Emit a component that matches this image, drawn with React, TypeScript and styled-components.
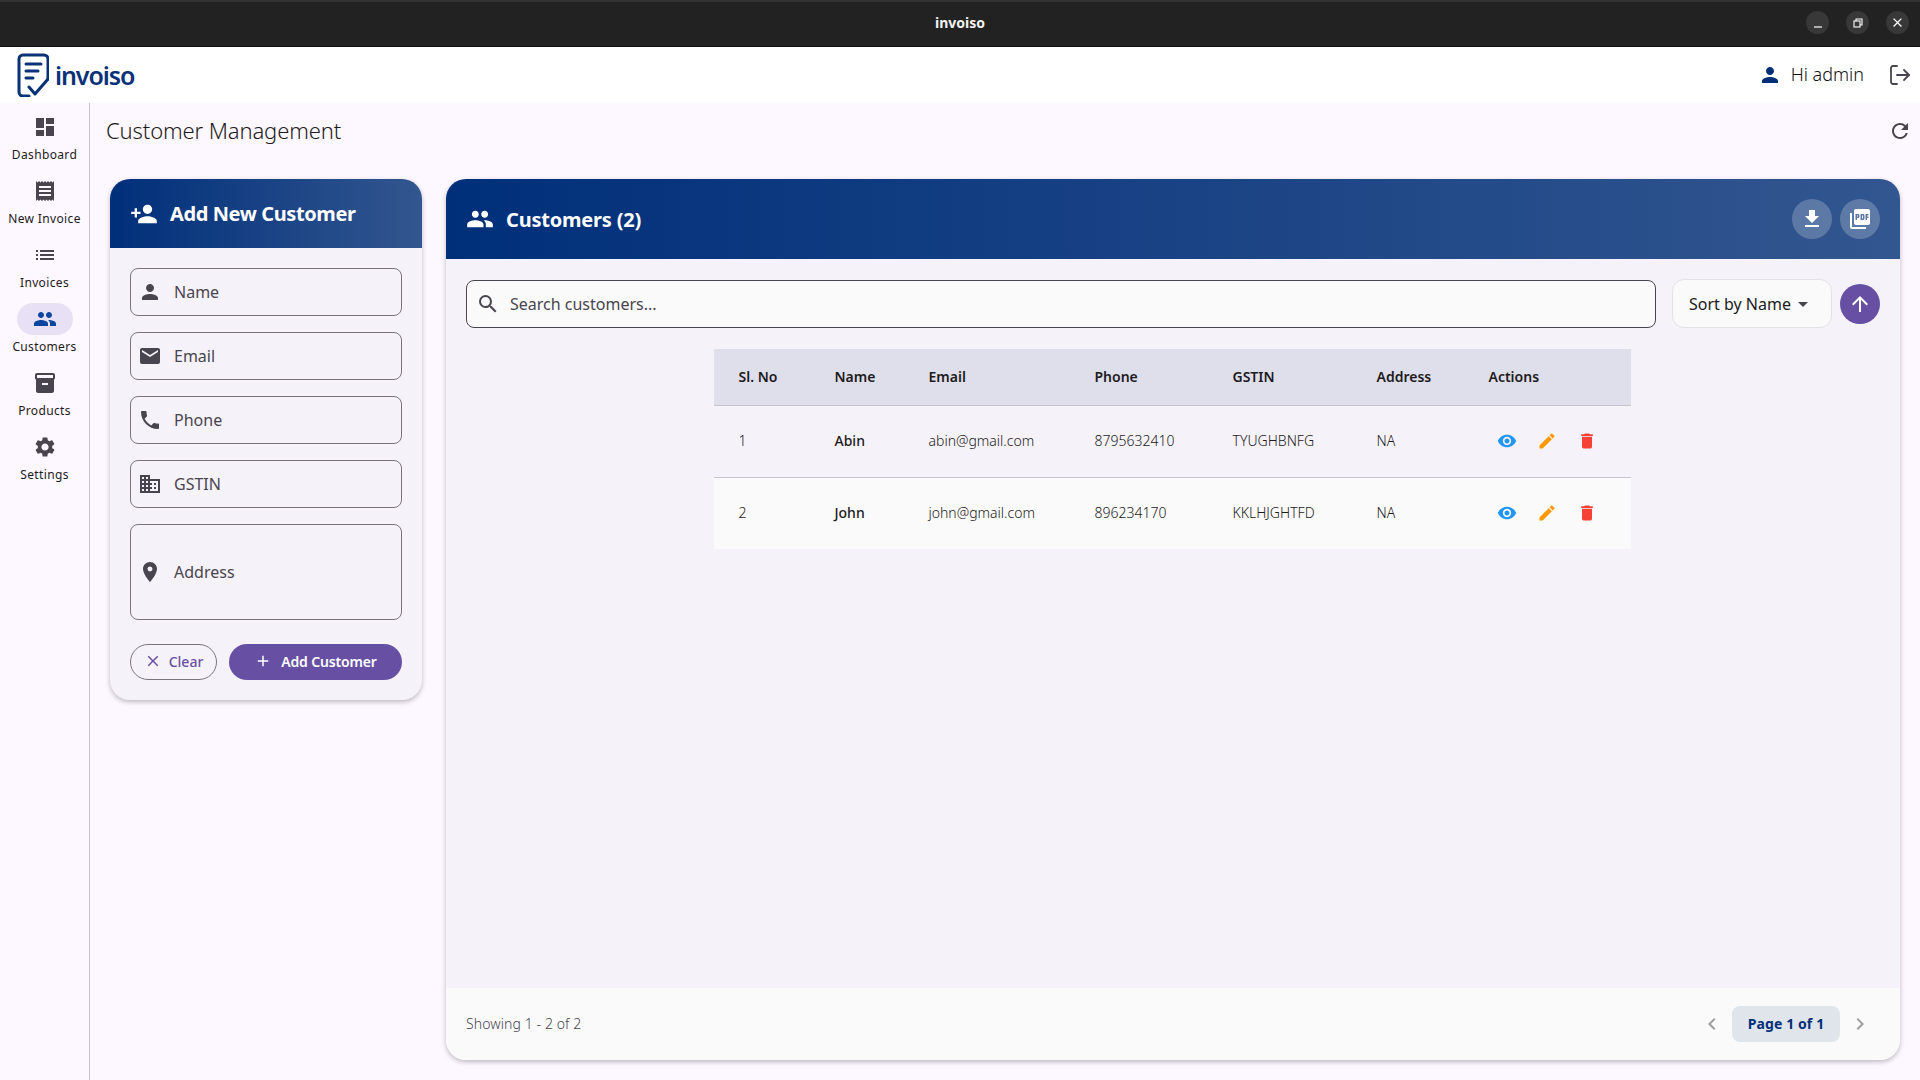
import React from 'react';
import styled, { createGlobalStyle } from 'styled-components';
import {
  MdDashboard, MdReceipt, MdList, MdPeople, MdInventory2, MdSettings, MdPerson, MdEmail, MdPhone,
  MdDomain, MdLocationOn, MdClose, MdAdd, MdPersonAdd, MdFileDownload, MdPictureAsPdf, MdArrowUpward,
  MdSearch, MdRefresh, MdVisibility, MdEdit, MdDelete, MdChevronLeft, MdChevronRight, MdArrowDropDown,
} from 'react-icons/md';
import { LogOut } from 'lucide-react';

const FONT = '"Noto Sans", "Open Sans", sans-serif';

const GlobalStyle = createGlobalStyle`
  html, body { margin: 0; padding: 0; background: #fdf7ff; }
  body { font-family: ${FONT}; color: #1d1b20; }
  * { box-sizing: border-box; }
`;

const Window = styled.div`
  width: 1920px;
  height: 1080px;
  overflow: hidden;
  display: flex;
  flex-direction: column;
  background: #fdf7ff;
`;

const TitleBar = styled.div`
  height: 47px;
  background: #222222;
  border-top: 2px solid #333333;
  border-bottom: 1px solid #111111;
  padding-bottom: 3px;
  display: flex;
  align-items: center;
  justify-content: center;
  position: relative;
  color: #f2f2f2;
  font-size: 14px;
  font-weight: 700;
`;

const WindowButtons = styled.div`
  position: absolute;
  right: 11px;
  top: 9px;
  display: flex;
  gap: 17px;
`;

const WindowButton = styled.div`
  width: 23px;
  height: 23px;
  border-radius: 50%;
  background: #383838;
  display: flex;
  align-items: center;
  justify-content: center;
  color: #ffffff;
`;

const AppHeader = styled.header`
  height: 56px;
  background: #ffffff;
  display: flex;
  align-items: center;
  justify-content: space-between;
  padding: 0 8px 0 17px;
`;

const Brand = styled.div`
  display: flex;
  align-items: flex-end;
  gap: 6px;
`;

const BrandName = styled.span`
  font-family: "Noto Sans", sans-serif;
  font-size: 25px;
  font-weight: 600;
  line-height: 32px;
  letter-spacing: -1.1px;
  color: #0b3278;
  margin-bottom: 6px;
`;

const UserArea = styled.div`
  display: flex;
  align-items: center;
  color: #111111;
  font-size: 18px;
  font-weight: 300;
`;

const UserName = styled.span`
  margin: 0 24px 2px 9px;
`;

const Body = styled.div`
  flex: 1;
  display: flex;
  min-height: 0;
`;

const Rail = styled.nav`
  width: 90px;
  border-right: 1px solid #cac4d0;
  padding-top: 8px;
  display: flex;
  flex-direction: column;
  align-items: center;
`;

const RailItem = styled.div`
  height: 64px;
  width: 100%;
  display: flex;
  flex-direction: column;
  align-items: center;
`;

const RailPill = styled.div<{ $active?: boolean }>`
  width: 56px;
  height: 32px;
  border-radius: 16px;
  display: flex;
  align-items: center;
  justify-content: center;
  background: ${(p) => (p.$active ? '#e8e0f5' : 'transparent')};
  color: ${(p) => (p.$active ? '#0b46a0' : '#49454f')};
`;

const RailLabel = styled.span`
  margin-top: 2px;
  font-size: 12px;
  line-height: 20px;
  letter-spacing: 0.35px;
  color: #1d1b20;
`;

const Main = styled.main`
  flex: 1;
  display: flex;
  flex-direction: column;
  min-width: 0;
`;

const PageHead = styled.div`
  height: 56px;
  flex: none;
  display: flex;
  align-items: center;
  justify-content: space-between;
  padding: 0 8px 0 16px;
  color: #49454f;
`;

const PageTitle = styled.h1`
  margin: 0 0 2px;
  font-size: 22px;
  font-weight: 300;
  line-height: 28px;
  letter-spacing: -0.12px;
  color: #1d1b20;
`;

const Content = styled.div`
  flex: 1;
  display: flex;
  gap: 24px;
  padding: 20px 20px 20px 20px;
  min-height: 0;
`;

const Card = styled.section`
  background: #f6f2fa;
  border-radius: 20px;
  box-shadow: 0 2px 5px rgba(0, 0, 0, 0.25);
  overflow: hidden;
  display: flex;
  flex-direction: column;
`;

const FormCard = styled(Card)`
  width: 312px;
  flex: none;
  align-self: flex-start;
`;

const ListCard = styled(Card)`
  flex: 1;
  min-width: 0;
`;

const CardHeader = styled.div<{ $tall?: boolean }>`
  height: ${(p) => (p.$tall ? 80 : 69)}px;
  flex: none;
  background: linear-gradient(90deg, #002f7a, #32568f);
  color: #ffffff;
  display: flex;
  align-items: center;
  gap: 12px;
  padding: 0 20px;
`;

const CardTitle = styled.h2`
  margin: 0;
  font-size: 20px;
  font-weight: 700;
  line-height: 28px;
  letter-spacing: -0.4px;
`;

const ListTitle = styled(CardTitle)`
  margin-top: 2px;
  letter-spacing: -0.2px;
`;

const HeaderActions = styled.div`
  margin-left: auto;
  display: flex;
  gap: 8px;
`;

const RoundButton = styled.button<{ $solid?: boolean }>`
  width: 40px;
  height: 40px;
  border: 0;
  padding: 0;
  border-radius: 50%;
  display: flex;
  align-items: center;
  justify-content: center;
  color: #ffffff;
  background: ${(p) => (p.$solid ? '#6750a4' : 'rgba(255, 255, 255, 0.22)')};
`;

const Form = styled.div`
  padding: 20px;
  display: flex;
  flex-direction: column;
  gap: 16px;
`;

const Field = styled.div<{ $tall?: boolean }>`
  height: ${(p) => (p.$tall ? 96 : 48)}px;
  border: 1px solid #79747e;
  border-radius: 8px;
  display: flex;
  align-items: center;
  gap: 12px;
  padding-left: 7px;
  font-size: 16px;
  color: #49454f;
`;

const FormButtons = styled.div`
  display: flex;
  gap: 12px;
  margin-top: 8px;
`;

const ClearButton = styled.button`
  width: 87px;
  height: 36px;
  border: 1px solid #79747e;
  border-radius: 18px;
  background: transparent;
  color: #6750a4;
  font-family: ${FONT};
  font-size: 14px;
  font-weight: 500;
  display: flex;
  align-items: center;
  justify-content: center;
  gap: 7px;
  padding: 0 0 2px;
`;

const AddButton = styled.button`
  flex: 1;
  height: 36px;
  border: 0;
  border-radius: 18px;
  background: #6750a4;
  color: #ffffff;
  font-family: ${FONT};
  font-size: 14px;
  font-weight: 600;
  letter-spacing: -0.15px;
  display: flex;
  align-items: center;
  justify-content: center;
  gap: 9px;
  padding: 0 0 2px;
`;

const Toolbar = styled.div`
  display: flex;
  align-items: center;
  padding: 20px 20px 0;
  flex: none;
`;

const SearchBox = styled.div`
  flex: 1;
  height: 48px;
  background: #fafafa;
  border: 1px solid #49454f;
  border-radius: 8px;
  display: flex;
  align-items: center;
  gap: 10px;
  padding-left: 9px;
  font-size: 16px;
  color: #49454f;
`;

const SortButton = styled.div`
  width: 160px;
  height: 49px;
  margin: 0 8px 0 16px;
  background: #fafafa;
  border: 1px solid #e3e0e6;
  border-radius: 12px;
  display: flex;
  align-items: center;
  padding-left: 16px;
  font-size: 16px;
  color: #1d1b20;
`;

const SortCaret = styled.span`
  display: flex;
  color: #49454f;
`;

const TableArea = styled.div`
  flex: 1;
  display: flex;
  justify-content: center;
  padding: 21px 2px 0 0;
  min-height: 0;
`;

const Table = styled.table`
  width: 917px;
  height: 200px;
  table-layout: fixed;
  border-collapse: collapse;
`;

const Th = styled.th<{ $w: number }>`
  width: ${(p) => p.$w}px;
  height: 56px;
  padding: 0 0 0 25px;
  background: #dfdeeb;
  border-bottom: 1px solid #cac4d0;
  text-align: left;
  font-size: 14px;
  font-weight: 600;
  color: #1d1b20;
`;

const Row = styled.tr<{ $alt?: boolean }>`
  height: 72px;
  background: ${(p) => (p.$alt ? '#fafafa' : 'transparent')};
  border-bottom: ${(p) => (p.$alt ? '0' : '1px solid #cac4d0')};
`;

const Td = styled.td<{ $strong?: boolean }>`
  padding: 0 0 2px 25px;
  font-size: 14px;
  font-weight: ${(p) => (p.$strong ? 500 : 300)};
  color: #1d1b20;
`;

const Actions = styled.div`
  display: flex;
  align-items: center;
  margin: 2px 0 0 -2px;
`;

const ActionIcon = styled.span<{ $color: string }>`
  width: 40px;
  display: flex;
  justify-content: center;
  color: ${(p) => p.$color};
`;

const Footer = styled.div`
  height: 72px;
  flex: none;
  background: #fafafa;
  display: flex;
  align-items: center;
  justify-content: space-between;
  padding: 0 28px 0 20px;
  font-size: 14px;
  font-weight: 300;
  letter-spacing: 0.1px;
  color: #49454f;
`;

const FooterText = styled.span`
  margin-bottom: 2px;
`;

const Pager = styled.div`
  display: flex;
  align-items: center;
  color: #9e9e9e;
  gap: 8px;
`;

const PageBadge = styled.div`
  width: 108px;
  height: 36px;
  border-radius: 8px;
  background: #e0e5ec;
  color: #002f7a;
  font-size: 14px;
  font-weight: 700;
  padding-bottom: 2px;
  display: flex;
  align-items: center;
  justify-content: center;
`;

const InvoisoMark = () => (
  <svg width="32" height="44" viewBox="0 0 32 44" fill="none" stroke="#0b3278" strokeWidth="3" strokeLinecap="round" strokeLinejoin="round">
    <path d="M31 26V6a4 4 0 0 0-4-4H6a4 4 0 0 0-4 4v33a4 4 0 0 0 4 4h6" />
    <path d="M9 11h15M9 18h12M9 25h7" />
    <path d="M12 34l6 7 13-15" />
  </svg>
);

const NAV = [
  { label: 'Dashboard', icon: MdDashboard },
  { label: 'New Invoice', icon: MdReceipt },
  { label: 'Invoices', icon: MdList },
  { label: 'Customers', icon: MdPeople, active: true },
  { label: 'Products', icon: MdInventory2 },
  { label: 'Settings', icon: MdSettings },
];

const FIELDS = [
  { label: 'Name', icon: MdPerson },
  { label: 'Email', icon: MdEmail },
  { label: 'Phone', icon: MdPhone },
  { label: 'GSTIN', icon: MdDomain },
];

const COLUMNS = [
  { label: 'Sl. No', w: 96 },
  { label: 'Name', w: 94 },
  { label: 'Email', w: 166 },
  { label: 'Phone', w: 138 },
  { label: 'GSTIN', w: 144 },
  { label: 'Address', w: 112 },
  { label: 'Actions', w: 167 },
];

const CUSTOMERS = [
  { id: 1, name: 'Abin', email: 'abin@gmail.com', phone: '8795632410', gstin: 'TYUGHBNFG', address: 'NA' },
  { id: 2, name: 'John', email: 'john@gmail.com', phone: '896234170', gstin: 'KKLHJGHTFD', address: 'NA' },
];

export default function App() {
  return (
    <Window>
      <GlobalStyle />
      <TitleBar>
        invoiso
        <WindowButtons>
          <WindowButton>
            <svg width="12" height="12" viewBox="0 0 12 12"><path d="M2 10h8" stroke="#fff" strokeWidth="1.2" /></svg>
          </WindowButton>
          <WindowButton>
            <svg width="12" height="12" viewBox="0 0 12 12" fill="none" stroke="#fff" strokeWidth="1.1"><rect x="2" y="4" width="6" height="6" /><path d="M4 4V2h6v6H8" /></svg>
          </WindowButton>
          <WindowButton><MdClose size={15} /></WindowButton>
        </WindowButtons>
      </TitleBar>

      <AppHeader>
        <Brand>
          <InvoisoMark />
          <BrandName>invoiso</BrandName>
        </Brand>
        <UserArea>
          <MdPerson size={24} color="#002f7a" />
          <UserName>Hi admin</UserName>
          <LogOut size={24} color="#49454f" strokeWidth={1.8} />
        </UserArea>
      </AppHeader>

      <Body>
        <Rail>
          {NAV.map(({ label, icon: Icon, active }) => (
            <RailItem key={label}>
              <RailPill $active={active}><Icon size={24} /></RailPill>
              <RailLabel>{label}</RailLabel>
            </RailItem>
          ))}
        </Rail>

        <Main>
          <PageHead>
            <PageTitle>Customer Management</PageTitle>
            <MdRefresh size={24} />
          </PageHead>

          <Content>
            <FormCard>
              <CardHeader>
                <MdPersonAdd size={28} />
                <CardTitle>Add New Customer</CardTitle>
              </CardHeader>
              <Form>
                {FIELDS.map(({ label, icon: Icon }) => (
                  <Field key={label}>
                    <Icon size={24} />
                    {label}
                  </Field>
                ))}
                <Field $tall>
                  <MdLocationOn size={24} />
                  Address
                </Field>
                <FormButtons>
                  <ClearButton><MdClose size={18} />Clear</ClearButton>
                  <AddButton><MdAdd size={18} />Add Customer</AddButton>
                </FormButtons>
              </Form>
            </FormCard>

            <ListCard>
              <CardHeader $tall>
                <MdPeople size={28} />
                <ListTitle>Customers (2)</ListTitle>
                <HeaderActions>
                  <RoundButton><MdFileDownload size={24} /></RoundButton>
                  <RoundButton><MdPictureAsPdf size={24} /></RoundButton>
                </HeaderActions>
              </CardHeader>

              <Toolbar>
                <SearchBox>
                  <MdSearch size={24} />
                  Search customers...
                </SearchBox>
                <SortButton>
                  Sort by Name
                  <SortCaret><MdArrowDropDown size={24} /></SortCaret>
                </SortButton>
                <RoundButton $solid><MdArrowUpward size={24} /></RoundButton>
              </Toolbar>

              <TableArea>
                <Table>
                  <thead>
                    <tr>
                      {COLUMNS.map((c) => <Th key={c.label} $w={c.w}>{c.label}</Th>)}
                    </tr>
                  </thead>
                  <tbody>
                    {CUSTOMERS.map((c, index) => (
                      <Row key={c.id} $alt={index === 1}>
                        <Td>{c.id}</Td>
                        <Td $strong>{c.name}</Td>
                        <Td>{c.email}</Td>
                        <Td>{c.phone}</Td>
                        <Td>{c.gstin}</Td>
                        <Td>{c.address}</Td>
                        <Td>
                          <Actions>
                            <ActionIcon $color="#2196f3"><MdVisibility size={20} /></ActionIcon>
                            <ActionIcon $color="#ff9800"><MdEdit size={20} /></ActionIcon>
                            <ActionIcon $color="#f44336"><MdDelete size={20} /></ActionIcon>
                          </Actions>
                        </Td>
                      </Row>
                    ))}
                  </tbody>
                </Table>
              </TableArea>

              <Footer>
                <FooterText>Showing 1 - 2 of 2</FooterText>
                <Pager>
                  <MdChevronLeft size={24} />
                  <PageBadge>Page 1 of 1</PageBadge>
                  <MdChevronRight size={24} />
                </Pager>
              </Footer>
            </ListCard>
          </Content>
        </Main>
      </Body>
    </Window>
  );
}
